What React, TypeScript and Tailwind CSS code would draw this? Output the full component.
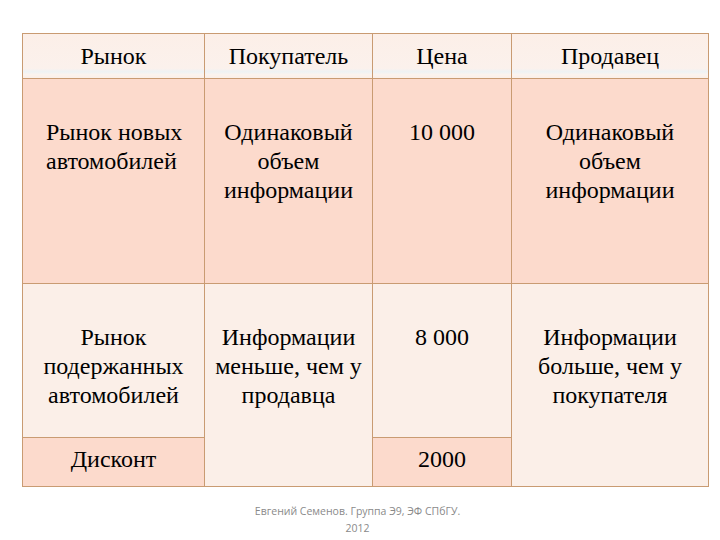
import React from 'react';

const cell = 'text-[24px] leading-[29px] text-black';
const peach = 'bg-[#fcdacc]';
const light = 'bg-[#fbefe8]';
const head =
  'bg-[linear-gradient(to_bottom,#fcefe8_0%,#fbf1ec_78%,#eef2f4_86%,#fbf3ee_92%,#fbefe8_100%)]';

const App = () => {
  return (
    <div className="w-[720px] h-[540px] bg-white relative font-['Liberation_Serif',serif]">
      <div className="pt-[33px] pl-[22px]">
        <div className="grid grid-cols-[181px_167px_138px_196px] grid-rows-[44px_204px_153px_48px] gap-px bg-[#c99b72] border border-[#c99b72] w-[687px]">
          {/* Header */}
          <div className={`${head} ${cell} flex items-center justify-center`}>Рынок</div>
          <div className={`${head} ${cell} flex items-center justify-center`}>Покупатель</div>
          <div className={`${head} ${cell} flex items-center justify-center`}>Цена</div>
          <div className={`${head} ${cell} flex items-center justify-center`}>Продавец</div>

          {/* Row 1 */}
          <div className={`${peach} ${cell} pt-[39px] pl-[23px] text-left`}>
            Рынок новых<br />автомобилей
          </div>
          <div className={`${peach} ${cell} pt-[39px] text-center`}>
            Одинаковый<br />объем<br />информации
          </div>
          <div className={`${peach} ${cell} pt-[39px] text-center`}>10 000</div>
          <div className={`${peach} ${cell} pt-[39px] text-center`}>
            Одинаковый<br />объем<br />информации
          </div>

          {/* Row 2 */}
          <div className={`${light} ${cell} pt-[39px] text-center`}>
            Рынок<br />подержанных<br />автомобилей
          </div>
          <div className={`${light} ${cell} pt-[39px] text-center row-span-2`}>
            Информации<br />меньше, чем у<br />продавца
          </div>
          <div className={`${light} ${cell} pt-[39px] text-center`}>8 000</div>
          <div className={`${light} ${cell} pt-[39px] text-center row-span-2`}>
            Информации<br />больше, чем у<br />покупателя
          </div>

          {/* Row 3 */}
          <div className={`${peach} ${cell} flex items-center justify-center pb-[6px]`}>Дисконт</div>
          <div className={`${peach} ${cell} flex items-center justify-center pb-[6px]`}>2000</div>
        </div>
      </div>

      <div className="mt-[16px] ml-[14px] w-[687px] text-center text-[10.5px] leading-[17px] text-[#8a8a8a] font-['Open_Sans',sans-serif]">
        Евгений Семенов. Группа Э9, ЭФ СПбГУ.
        <br />
        2012
      </div>
    </div>
  );
};

export default App;
